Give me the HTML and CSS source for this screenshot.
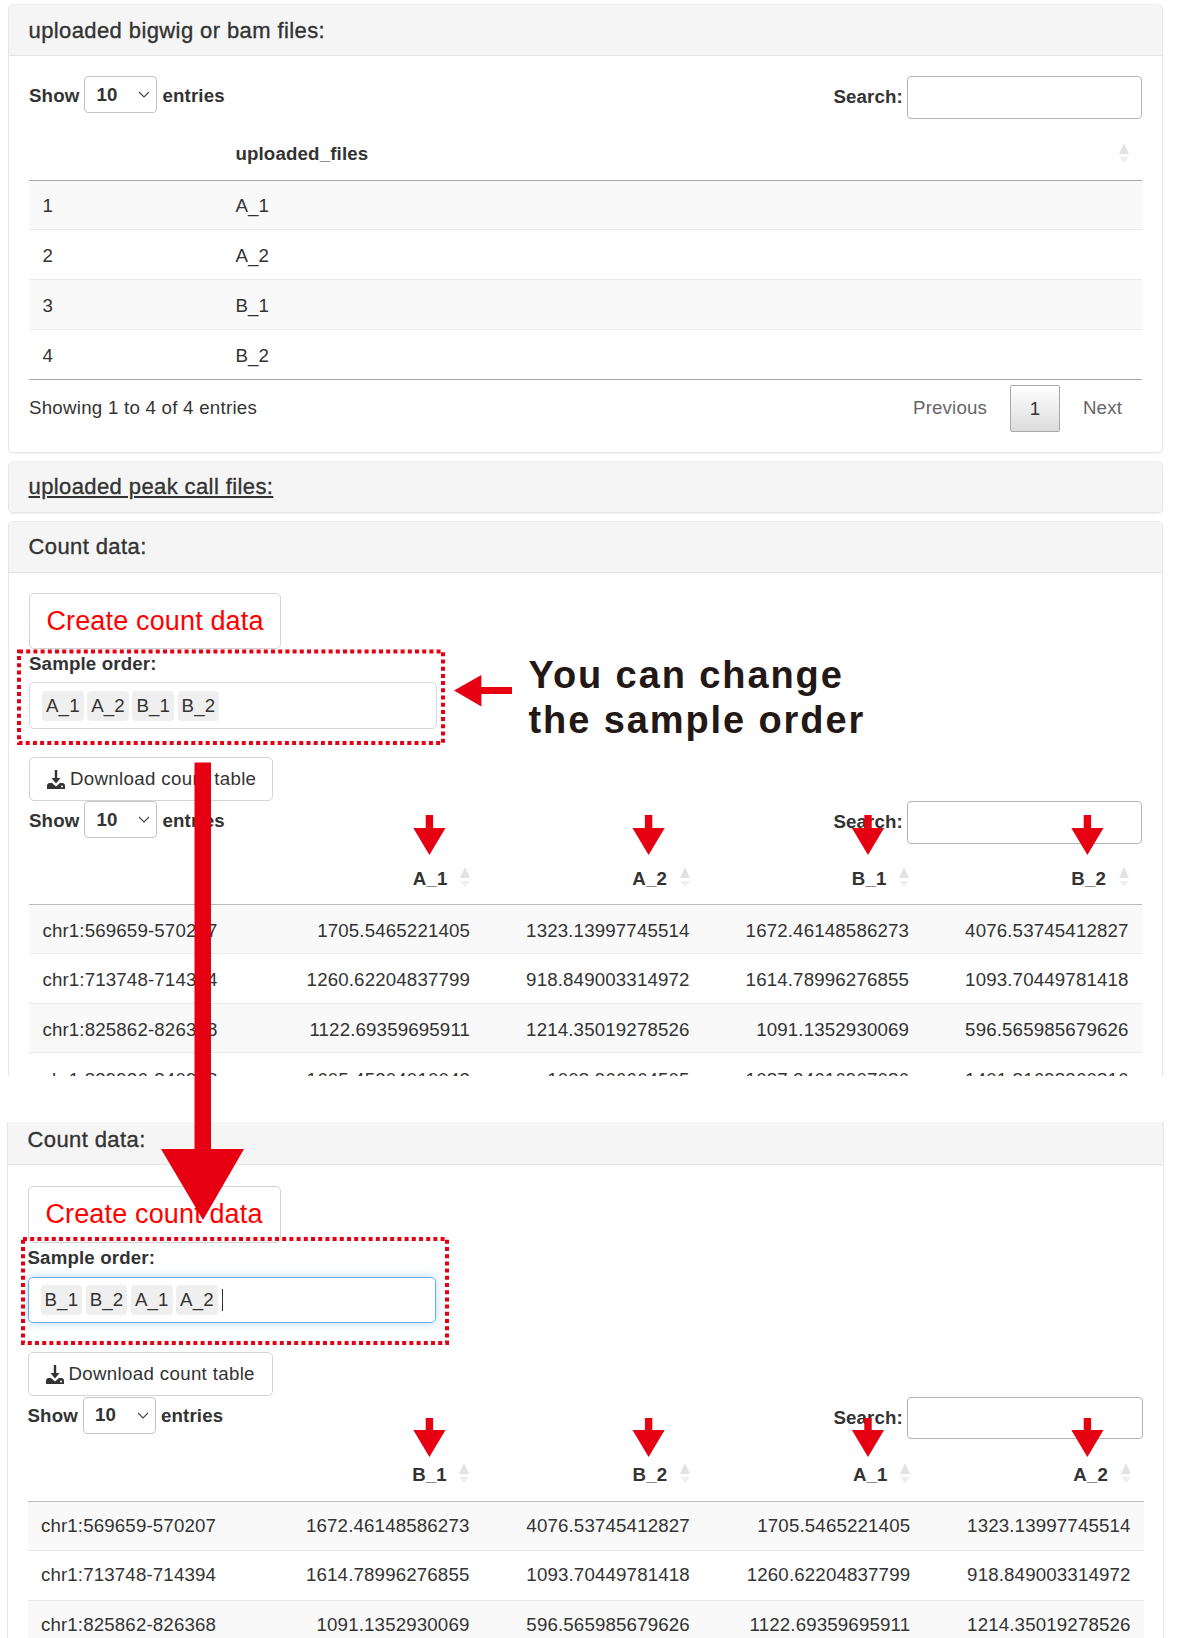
FILE: index.html
```html
<!DOCTYPE html>
<html lang="en">
  <head>
    <meta charset="utf-8">
    <title>Count data</title>
    <link rel="stylesheet" href="styles.css">
  </head>
  <body>
    <!-- upper screenshot -->
    <section class="crop crop-upper">
      <div class="panel panel-files">
        <div class="panel-head">uploaded bigwig or bam files:</div>
        <div class="panel-body">
          <div class="dt-top">
            <div class="dt-length">Show
              <div class="fake-select">10
                <svg viewBox="0 0 12 7" width="12" height="7"><path d="M1 1l5 5 5-5" fill="none" stroke="#444" stroke-width="1.1"/></svg>
              </div>
              entries</div>
            <label class="dt-search">Search: <input type="text"></label>
          </div>
          <table class="dt dt-files">
            <thead>
              <tr><th class="col-id"></th><th class="left">uploaded_files<svg class="sort sort-end" viewBox="0 0 10 20" width="10" height="20"><path d="M5 0l5 11H0z" fill="#e2e2e2"/><path d="M0 14h10l-5 6z" fill="#efefef"/></svg></th></tr>
            </thead>
            <tbody>
              <tr><td>1</td><td>A_1</td></tr>
              <tr><td>2</td><td>A_2</td></tr>
              <tr><td>3</td><td>B_1</td></tr>
              <tr><td>4</td><td>B_2</td></tr>
            </tbody>
          </table>
          <div class="dt-foot">
            <div class="dt-info">Showing 1 to 4 of 4 entries</div>
            <div class="pager"><span class="prev">Previous</span><span class="page-btn">1</span><span class="next">Next</span></div>
          </div>
        </div>
      </div>

      <div class="panel panel-closed">
        <div class="panel-head"><u>uploaded peak call files:</u></div>
      </div>

      <div class="panel panel-count">
        <div class="panel-head">Count data:</div>
        <div class="panel-body">
          <div class="create-btn">Create count data</div>
          <div class="field-label">Sample order:</div>
          <div class="order-input">
            <span class="order-item">A_1</span><span class="order-item">A_2</span><span class="order-item">B_1</span><span class="order-item">B_2</span>
          </div>
          <div class="download-btn">
            <svg viewBox="0 0 18 19" width="18" height="19"><path d="M7.8 0h2.4v8h3.3L9 13.5 4.5 8h3.3zM0 19v-3.5Q0 13.5 2 13h3l4 3.5 4-3.5h3q2 .5 2 2.5V19z" fill="#333"/><circle cx="15" cy="16.5" r="1" fill="#fff"/></svg>
            Download count table</div>
          <div class="dt-top">
            <div class="dt-length">Show
              <div class="fake-select">10
                <svg viewBox="0 0 12 7" width="12" height="7"><path d="M1 1l5 5 5-5" fill="none" stroke="#444" stroke-width="1.1"/></svg>
              </div>
              entries</div>
            <label class="dt-search">Search: <input type="text"></label>
          </div>
          <table class="dt dt-counts">
            <thead>
              <tr>
                <th class="col-id"></th>
                <th>A_1<svg class="sort" viewBox="0 0 10 20" width="10" height="20"><path d="M5 0l5 11H0z" fill="#e2e2e2"/><path d="M0 14h10l-5 6z" fill="#efefef"/></svg></th>
                <th>A_2<svg class="sort" viewBox="0 0 10 20" width="10" height="20"><path d="M5 0l5 11H0z" fill="#e2e2e2"/><path d="M0 14h10l-5 6z" fill="#efefef"/></svg></th>
                <th>B_1<svg class="sort" viewBox="0 0 10 20" width="10" height="20"><path d="M5 0l5 11H0z" fill="#e2e2e2"/><path d="M0 14h10l-5 6z" fill="#efefef"/></svg></th>
                <th>B_2<svg class="sort" viewBox="0 0 10 20" width="10" height="20"><path d="M5 0l5 11H0z" fill="#e2e2e2"/><path d="M0 14h10l-5 6z" fill="#efefef"/></svg></th>
              </tr>
            </thead>
            <tbody>
              <tr><td>chr1:569659-570207</td><td>1705.5465221405</td><td>1323.13997745514</td><td>1672.46148586273</td><td>4076.53745412827</td></tr>
              <tr><td>chr1:713748-714394</td><td>1260.62204837799</td><td>918.849003314972</td><td>1614.78996276855</td><td>1093.70449781418</td></tr>
              <tr><td>chr1:825862-826368</td><td>1122.69359695911</td><td>1214.35019278526</td><td>1091.1352930069</td><td>596.565985679626</td></tr>
              <tr><td>chr1:839926-840928</td><td>1605.45204010043</td><td>1008.966664505</td><td>1087.24616907086</td><td>1401.81698360816</td></tr>
            </tbody>
          </table>
        </div>
      </div>
    </section>

    <!-- lower screenshot, same page after reordering -->
    <section class="crop crop-lower">
      <div class="panel panel-count">
        <div class="panel-head">Count data:</div>
        <div class="panel-body">
          <div class="create-btn">Create count data</div>
          <div class="field-label">Sample order:</div>
          <div class="order-input order-focus">
            <span class="order-item">B_1</span><span class="order-item">B_2</span><span class="order-item">A_1</span><span class="order-item">A_2</span><span class="caret"></span>
          </div>
          <div class="download-btn">
            <svg viewBox="0 0 18 19" width="18" height="19"><path d="M7.8 0h2.4v8h3.3L9 13.5 4.5 8h3.3zM0 19v-3.5Q0 13.5 2 13h3l4 3.5 4-3.5h3q2 .5 2 2.5V19z" fill="#333"/><circle cx="15" cy="16.5" r="1" fill="#fff"/></svg>
            Download count table</div>
          <div class="dt-top">
            <div class="dt-length">Show
              <div class="fake-select">10
                <svg viewBox="0 0 12 7" width="12" height="7"><path d="M1 1l5 5 5-5" fill="none" stroke="#444" stroke-width="1.1"/></svg>
              </div>
              entries</div>
            <label class="dt-search">Search: <input type="text"></label>
          </div>
          <table class="dt dt-counts">
            <thead>
              <tr>
                <th class="col-id"></th>
                <th>B_1<svg class="sort" viewBox="0 0 10 20" width="10" height="20"><path d="M5 0l5 11H0z" fill="#e2e2e2"/><path d="M0 14h10l-5 6z" fill="#efefef"/></svg></th>
                <th>B_2<svg class="sort" viewBox="0 0 10 20" width="10" height="20"><path d="M5 0l5 11H0z" fill="#e2e2e2"/><path d="M0 14h10l-5 6z" fill="#efefef"/></svg></th>
                <th>A_1<svg class="sort" viewBox="0 0 10 20" width="10" height="20"><path d="M5 0l5 11H0z" fill="#e2e2e2"/><path d="M0 14h10l-5 6z" fill="#efefef"/></svg></th>
                <th>A_2<svg class="sort" viewBox="0 0 10 20" width="10" height="20"><path d="M5 0l5 11H0z" fill="#e2e2e2"/><path d="M0 14h10l-5 6z" fill="#efefef"/></svg></th>
              </tr>
            </thead>
            <tbody>
              <tr><td>chr1:569659-570207</td><td>1672.46148586273</td><td>4076.53745412827</td><td>1705.5465221405</td><td>1323.13997745514</td></tr>
              <tr><td>chr1:713748-714394</td><td>1614.78996276855</td><td>1093.70449781418</td><td>1260.62204837799</td><td>918.849003314972</td></tr>
              <tr><td>chr1:825862-826368</td><td>1091.1352930069</td><td>596.565985679626</td><td>1122.69359695911</td><td>1214.35019278526</td></tr>
            </tbody>
          </table>
        </div>
      </div>
    </section>

    <!-- red annotations drawn over both screenshots -->
    <svg class="marks" viewBox="0 0 1182 1638" width="1182" height="1638">
      <g fill="none" stroke="#e60012" stroke-width="4" stroke-dasharray="4 3.2">
        <rect x="19" y="651.5" width="424" height="91.5"/>
        <rect x="23" y="1239" width="424" height="104"/>
      </g>
      <g fill="#e60012">
        <path d="M194.5 762.5H211V1149H244L203 1220 161 1149H194.5z"/>
        <path d="M454 690.6L481.4 675V687H512V694H481.4V706.6z"/>
        <path d="M425.7 815h7.4v13H445.5L429.4 855 413.3 828H425.7z"/>
        <path d="M644.9 815h7.4v13H664.7L648.6 855 632.5 828H644.9z"/>
        <path d="M864.3 815h7.4v13H884.1L868 855 851.9 828H864.3z"/>
        <path d="M1083.7 815h7.4v13H1103.5L1087.4 855 1071.3 828H1083.7z"/>
        <path d="M425.7 1418h7.4v12H445.5L429.4 1457 413.3 1430H425.7z"/>
        <path d="M644.9 1418h7.4v12H664.7L648.6 1457 632.5 1430H644.9z"/>
        <path d="M864.3 1418h7.4v12H884.1L868 1457 851.9 1430H864.3z"/>
        <path d="M1083.7 1418h7.4v12H1103.5L1087.4 1457 1071.3 1430H1083.7z"/>
      </g>
    </svg>
    <div class="note">You can change<br>the sample order</div>
  </body>
</html>
```

FILE: styles.css
```css
* {
  box-sizing: border-box;
}

body {
  position: relative;
  width: 1182px;
  height: 1638px;
  margin: 0;
  overflow: hidden;
  background-color: #fff;
  color: #333;
  font-family: "Liberation Sans", Arial, sans-serif;
  font-size: 18.7px;
  line-height: 26px;
  letter-spacing: .15px;
}

/* the two screenshot crops */
.crop {
  overflow: hidden;
}

.crop-upper {
  height: 1076px;
  margin-left: 8px;
  width: 1155px;
  padding-top: 4px;
}

.crop-lower {
  height: 516.5px;
  margin-top: 45.5px;
  margin-left: 6.5px;
  width: 1157.5px;
}

/* panels */
.panel {
  margin-bottom: 8px;
  background-color: #fff;
  border: 1px solid #e6e6e6;
  border-top-color: #eee;
  border-radius: 5px;
  box-shadow: 0 1px 2px rgba(0, 0, 0, .06);
}

.panel-head {
  height: 50.5px;
  padding: 0 19.5px;
  background-color: #f5f5f5;
  border-bottom: 1px solid #e2e2e2;
  border-radius: 4px 4px 0 0;
  font-size: 22px;
  line-height: 50px;
  letter-spacing: .4px;
  -webkit-text-stroke: .35px #333;
}

.panel-files .panel-head {
  line-height: 52px;
}

.panel-closed .panel-head {
  border-bottom: 0;
  border-radius: 4px;
}

.panel-body {
  padding: 20.5px 20px 20px;
}

/* datatable controls */
.dt-top {
  display: flex;
  justify-content: space-between;
  align-items: flex-start;
  height: 43px;
}

.dt-length {
  display: flex;
  align-items: flex-start;
  gap: 5px;
  height: 37px;
  line-height: 39px;
  font-weight: bold;
}

.fake-select {
  display: flex;
  justify-content: space-between;
  align-items: center;
  width: 73px;
  height: 37px;
  padding: 0 6px 0 11px;
  border: 1px solid #c4c4c4;
  border-radius: 4px;
  line-height: 26px;
}

.dt-search {
  display: flex;
  align-items: center;
  gap: 4px;
  font-weight: bold;
}

.dt-search input {
  width: 235px;
  height: 42.5px;
  border: 1px solid #b4b4b4;
  border-radius: 4px;
  background-color: #fff;
}

/* tables */
.dt {
  width: 100%;
  border-collapse: collapse;
  table-layout: fixed;
}

.dt th {
  position: relative;
  padding: 21.5px 36px 12px 13.4px;
  text-align: right;
  font-weight: bold;
  border-bottom: 1px solid #bbb;
}

.dt td {
  height: 49.5px;
  padding: 4px 13.4px 0;
  text-align: right;
  border-top: 1px solid #e8e8e8;
  white-space: nowrap;
}

.dt tbody tr:first-child td {
  border-top: 0;
}

.dt tbody tr:nth-child(odd) {
  background-color: #f9f9f9;
}

.dt td:first-child,
.dt .left {
  text-align: left;
}

.sort {
  position: absolute;
  right: 13.5px;
  top: 23px;
}

.dt-files .col-id {
  width: 193px;
}

.dt-files th,
.dt-files td {
  text-align: left;
}

.dt-files {
  border-bottom: 1px solid #aaa;
}

.dt-files th {
  padding-bottom: 13px;
  border-bottom-color: #aaa;
}

.dt-files td {
  height: 49.8px;
  padding-top: 3px;
}

.dt-files .sort {
  top: 24px;
}

.dt-counts .col-id {
  width: 235px;
}

.dt-foot {
  display: flex;
  justify-content: space-between;
  align-items: center;
  height: 52px;
  padding-top: 5px;
}

.dt-info {
  letter-spacing: .25px;
}

.pager {
  display: flex;
  align-items: center;
  color: #666;
}

.page-btn {
  width: 50px;
  height: 47px;
  margin: 0 23px;
  border: 1px solid #a8a8a8;
  border-radius: 2px;
  background: linear-gradient(#fff, #dcdcdc);
  color: #333;
  text-align: center;
  line-height: 45px;
}

.next {
  margin-right: 20px;
}

/* count data controls */
.create-btn {
  width: 252px;
  height: 56px;
  border: 1px solid #d4d4d4;
  border-radius: 5px;
  color: #f00;
  font-size: 27px;
  line-height: 54px;
  text-align: center;
}

.field-label {
  margin-top: 2px;
  font-weight: bold;
}

.order-input {
  display: flex;
  align-items: center;
  gap: 3.5px;
  width: 408px;
  height: 47px;
  margin-top: 5px;
  padding: 0 12px;
  border: 1px solid #d8d8d8;
  border-radius: 5px;
}

.order-item {
  height: 30px;
  padding: 0 4px;
  border-radius: 4px;
  background-color: #efefef;
  line-height: 30px;
}

.order-focus {
  border-color: #66afe9;
  box-shadow: 0 0 8px rgba(102, 175, 233, .5);
}

.caret {
  width: 1px;
  height: 22px;
  margin-left: 1px;
  background-color: #333;
}

.download-btn {
  display: flex;
  align-items: center;
  gap: 5px;
  width: 244px;
  height: 44px;
  margin-top: 28px;
  padding-left: 17px;
  border: 1px solid #d4d4d4;
  border-radius: 5px;
  letter-spacing: .33px;
}

/* lower crop runs a little taller and has square corners */
.crop-lower .panel {
  border-top: 0;
  border-radius: 0;
  box-shadow: none;
}

.crop-lower .panel-head {
  height: 43.5px;
  border-radius: 0;
  line-height: 36px;
  padding-left: 20px;
}

.crop-lower .panel-body {
  padding: 21px 20px 0;
}

.crop-lower .create-btn {
  width: 253px;
  height: 57px;
}

.crop-lower .field-label {
  margin-top: 2px;
}

.crop-lower .order-input {
  margin-top: 6px;
  height: 46px;
}

.crop-lower .download-btn {
  width: 245px;
  margin-top: 29px;
}

.crop-lower .dt-top {
  margin-top: .5px;
}

.crop-lower .dt-length {
  line-height: 37px;
}

.crop-lower .fake-select {
  line-height: 26px;
}

.crop-lower .dt th {
  padding-top: 22.5px;
  padding-bottom: 12.5px;
}

.crop-lower .dt td {
  height: 49.5px;
  padding-top: 0;
}

.crop-lower .dt-search input {
  width: 236px;
}

.crop-lower .dt-counts {
  width: 1116.5px;
}

/* annotations over the crops */
.marks {
  position: absolute;
  left: 0;
  top: 0;
  pointer-events: none;
}

.note {
  position: absolute;
  left: 528.5px;
  top: 653px;
  color: #231815;
  font-size: 38px;
  font-weight: bold;
  line-height: 44.5px;
  letter-spacing: 1.9px;
  white-space: nowrap;
}
```
